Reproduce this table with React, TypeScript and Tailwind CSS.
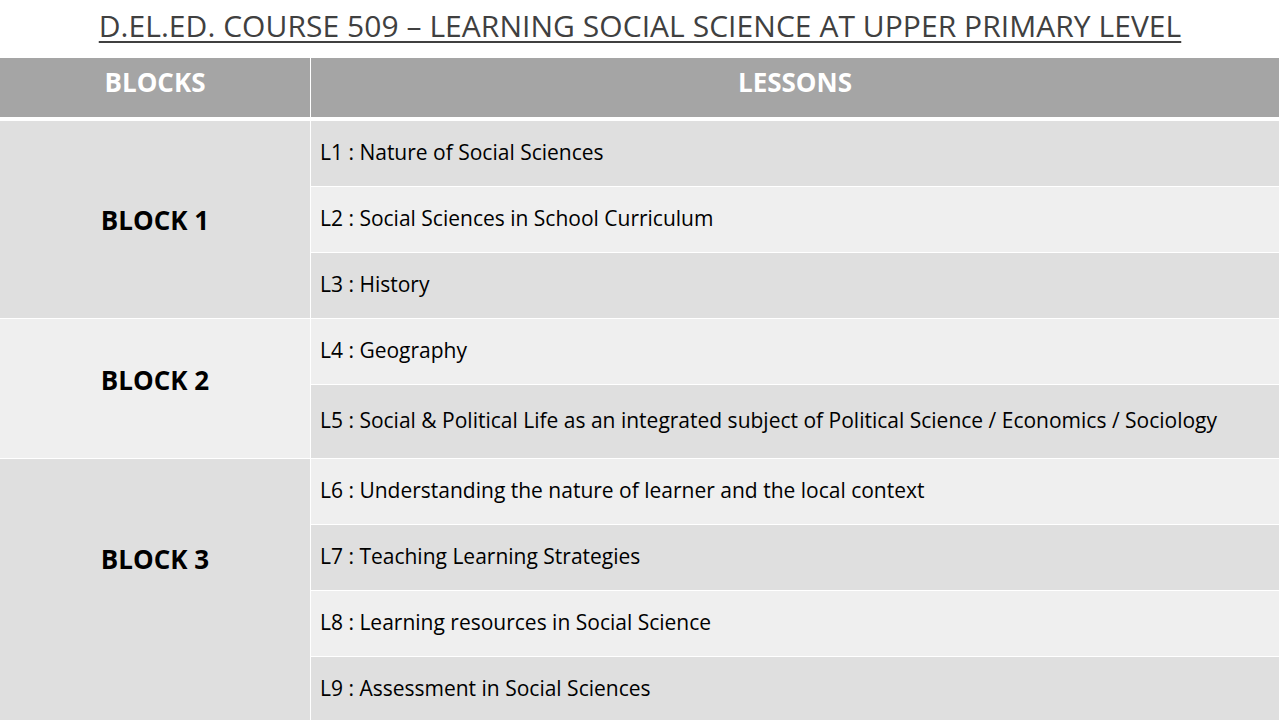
import React from "react";

const font = { fontFamily: '"Open Sans", "Liberation Sans", sans-serif' };

type Lesson = { text: string; h: string; dark: boolean };

function LessonRow({ l }: { l: Lesson }) {
  return (
    <div
      className={`${l.h} ${l.dark ? "bg-[#dfdfdf]" : "bg-[#efefef]"} flex items-center pl-[9px] pb-[1px] text-[21px] text-black whitespace-nowrap`}
    >
      {l.text}
    </div>
  );
}

function Block({
  name,
  dark,
  pt,
  lessons,
}: {
  name: string;
  dark: boolean;
  pt: string;
  lessons: Lesson[];
}) {
  return (
    <div className="flex gap-[1px]">
      <div
        className={`w-[310px] shrink-0 ${dark ? "bg-[#dfdfdf]" : "bg-[#efefef]"} flex justify-center ${pt}`}
      >
        <div className="h-[30px] leading-[30px] text-[26px] font-bold text-black">
          {name}
        </div>
      </div>
      <div className="flex-1 flex flex-col gap-[1px]">
        {lessons.map((l, i) => (
          <LessonRow key={i} l={l} />
        ))}
      </div>
    </div>
  );
}

export default function App() {
  return (
    <div className="w-[1280px] h-[720px] overflow-hidden bg-white" style={font}>
      <div className="h-[58px] flex justify-center pt-[7px]">
        <div className="text-[30px] leading-[38px] text-[#404040] underline decoration-[2px] underline-offset-[4px] tracking-[0.05px] whitespace-nowrap">
          D.EL.ED. COURSE 509 – LEARNING SOCIAL SCIENCE AT UPPER PRIMARY LEVEL
        </div>
      </div>
      <div className="w-[1279px] flex flex-col">
        <div className="h-[59px] flex gap-[1px] border-b-[4px] border-white box-content">
          <div className="w-[310px] shrink-0 bg-[#a5a5a5] flex items-center justify-center pb-[10px] text-white font-bold text-[26px]">
            BLOCKS
          </div>
          <div className="flex-1 bg-[#a5a5a5] flex items-center justify-center pb-[10px] text-white font-bold text-[26px]">
            LESSONS
          </div>
        </div>
        <div className="flex flex-col gap-[1px]">
          <Block
            name="BLOCK 1"
            dark={true}
            pt="pt-[84px]"
            lessons={[
              { text: "L1 : Nature of Social Sciences", h: "h-[65px]", dark: true },
              { text: "L2 : Social Sciences in School Curriculum", h: "h-[65px]", dark: false },
              { text: "L3 : History", h: "h-[65px]", dark: true },
            ]}
          />
          <Block
            name="BLOCK 2"
            dark={false}
            pt="pt-[46px]"
            lessons={[
              { text: "L4 : Geography", h: "h-[65px]", dark: false },
              {
                text: "L5 : Social & Political Life as an integrated subject of Political Science / Economics / Sociology",
                h: "h-[73px]",
                dark: true,
              },
            ]}
          />
          <Block
            name="BLOCK 3"
            dark={true}
            pt="pt-[85px]"
            lessons={[
              { text: "L6 : Understanding the nature of learner and the local context", h: "h-[65px]", dark: false },
              { text: "L7 : Teaching Learning Strategies", h: "h-[65px]", dark: true },
              { text: "L8 : Learning resources in Social Science", h: "h-[65px]", dark: false },
              { text: "L9 : Assessment in Social Sciences", h: "h-[65px]", dark: true },
            ]}
          />
        </div>
      </div>
    </div>
  );
}
